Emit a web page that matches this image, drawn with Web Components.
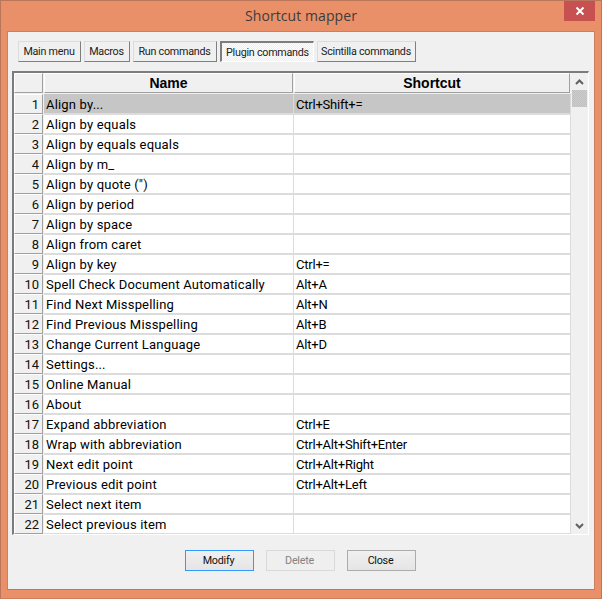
<!DOCTYPE html>
<html><head><meta charset="utf-8"><style>
html,body{margin:0;padding:0;width:602px;height:599px;overflow:hidden;background:#ea9068}
</style></head><body>
<sm-window>
<sm-tabs slot="tabs"></sm-tabs>
<sm-grid slot="grid"></sm-grid>
<sm-actions slot="actions"></sm-actions>
</sm-window>
<script>
const FONT='Roboto,"Liberation Sans",sans-serif';
customElements.define('sm-window',class extends HTMLElement{constructor(){super();this.attachShadow({mode:'open'}).innerHTML=`<style>
:host{display:flex;flex-direction:column;width:602px;height:599px;box-sizing:border-box;background:#ea9068;border:1px solid #b9765a;border-bottom-color:#c98061;font-family:${FONT}}
.title{height:30px;flex:none;display:flex;align-items:center;justify-content:center;position:relative;font:14px "Open Sans",sans-serif;color:#3c3c3c;letter-spacing:.08px;padding-bottom:1px;box-sizing:border-box}
.x{position:absolute;right:6px;top:0;width:31px;height:20px;background:#c75050;display:flex;align-items:center;justify-content:center}
.client{flex:none;margin:0 6px;width:588px;height:559px;box-sizing:border-box;background:#f0f0f0;border:1px solid #c98061;border-bottom-color:#bd795b;display:flex;flex-direction:column;padding:9px 5px 0 4px}
</style><div class="title">Shortcut mapper<span class="x"><svg width="10" height="10" viewBox="0 0 10 10"><path d="M1.5 1.5l7 7M8.5 1.5l-7 7" stroke="#fff" stroke-width="2"/></svg></span></div>
<div class="client"><slot name="tabs"></slot><slot name="grid"></slot><slot name="actions"></slot></div>`}});

customElements.define('sm-tab',class extends HTMLElement{constructor(){super();this.attachShadow({mode:'open'}).innerHTML=`<style>
:host{display:flex;align-items:center;justify-content:center;box-sizing:border-box;height:21px;padding:0 1px 1px 0;background:#f0f0f0;border:1px solid;border-color:#dcdcdc #7f7f7f #7f7f7f #dcdcdc;font:10.75px Roboto,sans-serif;letter-spacing:-.25px;color:#222;white-space:nowrap}
:host([active]){background:repeating-conic-gradient(#fff 0 25%,#ececec 0 50%) 0 0/2px 2px;border-width:2px 1px 1px 2px;border-color:#7d7d7d #fff #fff #7d7d7d;padding:1px 0 0}
</style><slot></slot>`}});

customElements.define('sm-tabs',class extends HTMLElement{constructor(){super();this.attachShadow({mode:'open'}).innerHTML=`<style>
:host{display:flex;gap:3px;height:30px;flex:none;padding-left:6px;align-items:flex-start}
</style><slot></slot>`;
[['Main menu',63],['Macros',46],['Run commands',84],['Plugin commands',94],['Scintilla commands',99]].forEach(([t,w],i)=>{const e=document.createElement('sm-tab');e.textContent=t;e.style.width=w+'px';if(i==3)e.setAttribute('active','');this.append(e)})}});

customElements.define('sm-row',class extends HTMLElement{
static get observedAttributes(){return ['n']}
constructor(){super();this.attachShadow({mode:'open'}).innerHTML=`<style>
:host{display:grid;grid-template-columns:30px 250px 277px;height:20px;font:13px Roboto,sans-serif;color:#000}
.n{box-sizing:border-box;height:20px;background:#f0f0f0;border:1px solid;border-color:#fff #a0a0a0 #a0a0a0 #fff;text-align:right;padding-right:3px;line-height:20px;margin-right:1px;color:#111}
.c{box-sizing:border-box;height:20px;background:#fff;border-right:1px solid #dcdcdc;border-top:1px solid #dcdcdc;border-bottom:1px solid #dcdcdc;padding-left:2px;line-height:19px;white-space:nowrap;overflow:hidden}
.a{letter-spacing:.18px}
.b{letter-spacing:-.22px}
:host([sel]) .c{background:#c6c6c6;border-top-color:#c6c6c6}
</style><div class="n"></div><div class="c a"><slot name="a"></slot></div><div class="c b"><slot name="b"></slot></div>`}
attributeChangedCallback(k,o,v){this.shadowRoot.querySelector('.n').textContent=v}});

customElements.define('sm-scroll',class extends HTMLElement{constructor(){super();this.attachShadow({mode:'open'}).innerHTML=`<style>
:host{display:flex;flex-direction:column;width:15px;background:#f0f0f0;flex:none;margin-right:1px}
.a{height:17px;display:flex;align-items:center;justify-content:center}
.t{height:17px;background:repeating-conic-gradient(#cdcdcd 0 25%,#c0c0c0 0 50%) 0 0/2px 2px}
.s{flex:1}
</style><div class="a"><svg width="9" height="6" viewBox="0 0 9 6"><path d="M1 5l3.5-3.5L8 5" fill="none" stroke="#606060" stroke-width="2"/></svg></div><div class="t"></div><div class="s"></div><div class="a"><svg width="9" height="6" viewBox="0 0 9 6"><path d="M1 1l3.5 3.5L8 1" fill="none" stroke="#606060" stroke-width="2"/></svg></div>`}});

customElements.define('sm-grid',class extends HTMLElement{constructor(){super();this.attachShadow({mode:'open'}).innerHTML=`<style>
:host{display:flex;flex:none;box-sizing:border-box;width:577px;height:464px;border-top:2px solid #7c7c7c;border-left:2px solid #7c7c7c;border-right:1px solid #fff;border-bottom:1px solid #fff;font:bold 14px "Liberation Sans",sans-serif}
.m{width:558px;flex:none;display:flex;flex-direction:column}
.h{display:grid;grid-template-columns:30px 250px 277px;height:21px;flex:none}
.h div{box-sizing:border-box;height:20px;margin-right:1px;background:#f0f0f0;border:1px solid;border-color:#fff #a0a0a0 #a0a0a0 #fff;text-align:center;line-height:18px}
</style><div class="m"><div class="h"><div></div><div>Name</div><div>Shortcut</div></div><slot></slot></div><sm-scroll></sm-scroll>`;
const rows=[['Align by...','Ctrl+Shift+='],['Align by equals'],['Align by equals equals'],['Align by m_'],['Align by quote (")'],['Align by period'],['Align by space'],['Align from caret'],['Align by key','Ctrl+='],['Spell Check Document Automatically','Alt+A'],['Find Next Misspelling','Alt+N'],['Find Previous Misspelling','Alt+B'],['Change Current Language','Alt+D'],['Settings...'],['Online Manual'],['About'],['Expand abbreviation','Ctrl+E'],['Wrap with abbreviation','Ctrl+Alt+Shift+Enter'],['Next edit point','Ctrl+Alt+Right'],['Previous edit point','Ctrl+Alt+Left'],['Select next item'],['Select previous item']];
rows.forEach(([a,b],i)=>{const r=document.createElement('sm-row');r.setAttribute('n',i+1);if(!i)r.setAttribute('sel','');const s=document.createElement('span');s.slot='a';s.textContent=a;r.append(s);if(b){const t=document.createElement('span');t.slot='b';t.textContent=b;r.append(t)}this.append(r)})}});

customElements.define('sm-button',class extends HTMLElement{constructor(){super();this.attachShadow({mode:'open'}).innerHTML=`<style>
:host{display:flex;align-items:center;justify-content:center;box-sizing:border-box;width:69px;height:21px;padding-right:2px;background:linear-gradient(#f0f0f0,#e5e5e5);border:1px solid #acacac;font:10.75px Roboto,sans-serif;letter-spacing:-.25px;color:#111}
:host([primary]){border-color:#3399ff;background:linear-gradient(#f0f0f0,#e5e5e5)}
:host([disabled]){background:#efefef;border-color:#d9d9d9;color:#838383}
</style><slot></slot>`}});

customElements.define('sm-actions',class extends HTMLElement{constructor(){super();this.attachShadow({mode:'open'}).innerHTML=`<style>
:host{display:flex;gap:12px;padding-top:15px;padding-left:173px;flex:none}
</style><sm-button primary>Modify</sm-button><sm-button disabled>Delete</sm-button><sm-button>Close</sm-button>`}});
</script></body></html>
